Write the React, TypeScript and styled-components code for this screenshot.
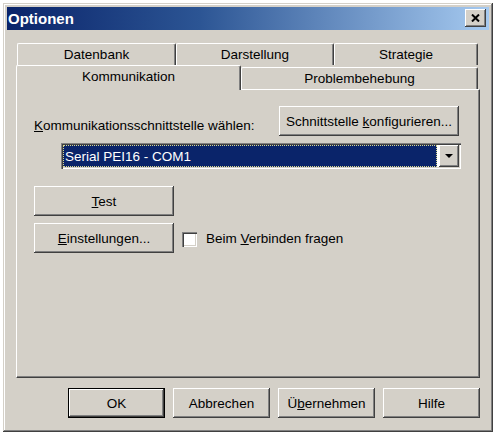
import styled, { createGlobalStyle } from "styled-components";

const GlobalStyle = createGlobalStyle`
  body {
    margin: 0;
    background: #ffffff;
    font-family: "Liberation Sans", Arial, sans-serif;
  }
`

const Window = styled.div`
  box-sizing: border-box;
  width: 490px;
  height: 429px;
  margin: 3px;
  padding: 4px;
  display: flex;
  flex-direction: column;
  background: #d4d0c8;
  box-shadow: inset -1px -1px #404040, inset 1px 1px #d4d0c8,
    inset -2px -2px #808080, inset 2px 2px #ffffff;
`

const TitleBar = styled.div`
  height: 23px;
  display: flex;
  align-items: center;
  justify-content: space-between;
  padding: 0 3px 0 1px;
  background: linear-gradient(to right, #0a246a 0%, #2c5594 40%, #a6caf0 100%);
`

const Title = styled.span`
  color: #ffffff;
  font-weight: bold;
  font-size: 15px;
`

const CloseButton = styled.div`
  box-sizing: border-box;
  width: 21px;
  height: 18px;
  margin-top: -2px;
  display: flex;
  align-items: center;
  justify-content: center;
  background: #d4d0c8;
  box-shadow: inset -1px -1px #404040, inset 1px 1px #ffffff,
    inset -2px -2px #808080;
`

const Body = styled.div`
  flex: 1;
  display: flex;
  flex-direction: column;
  padding: 13px 9px 0 9px;
`

const TabRow = styled.div<{ $height: number; $indent: number }>`
  display: flex;
  align-items: flex-end;
  height: ${p => p.$height}px;
  padding-left: ${p => p.$indent}px;
`

const Tab = styled.div<{ $width: number; $selected?: boolean }>`
  box-sizing: border-box;
  width: ${p => p.$width}px;
  height: ${p => (p.$selected ? 25 : 22)}px;
  margin-bottom: ${p => (p.$selected ? -1 : 0)}px;
  position: relative;
  z-index: ${p => (p.$selected ? 2 : 0)};
  display: flex;
  align-items: center;
  justify-content: center;
  padding-bottom: ${p => (p.$selected ? 3 : 0)}px;
  font-size: 13.5px;
  color: #000000;
  background: #d4d0c8;
  border-top: 1px solid #ffffff;
  border-left: 1px solid #ffffff;
  border-right: 1px solid #404040;
  border-radius: 2px 2px 0 0;
  box-shadow: inset -1px 0 #808080;
`

const Panel = styled.div`
  box-sizing: border-box;
  height: 289px;
  position: relative;
  z-index: 1;
  padding: 16px 20px 0 17px;
  display: flex;
  flex-direction: column;
  border-top: 1px solid #ffffff;
  border-left: 1px solid #ffffff;
  border-right: 1px solid #404040;
  border-bottom: 1px solid #404040;
  box-shadow: inset -1px -1px #808080;
`

const TopLine = styled.div`
  display: flex;
  justify-content: space-between;
  align-items: flex-end;
`

const Label = styled.span`
  font-size: 13.5px;
  color: #000000;
  padding-bottom: 3px;
`

const Button = styled.div<{ $width: number; $default?: boolean }>`
  box-sizing: border-box;
  width: ${p => p.$width}px;
  height: 30px;
  display: flex;
  align-items: center;
  justify-content: center;
  font-size: 13.5px;
  color: #000000;
  background: #d4d0c8;
  border: ${p => (p.$default ? "1px solid #000000" : "none")};
  box-shadow: inset -1px -1px #404040, inset 1px 1px #ffffff,
    inset -2px -2px #808080;
`

const Combo = styled.div`
  box-sizing: border-box;
  width: 400px;
  height: 26px;
  margin: 7px 0 0 27px;
  padding: 2px;
  display: flex;
  background: #ffffff;
  box-shadow: inset 1px 1px #808080, inset 2px 2px #404040,
    inset -1px -1px #ffffff, inset -2px -2px #d4d0c8;
`

const Selection = styled.div`
  flex: 1;
  display: flex;
  align-items: center;
  margin-right: 2px;
  padding-left: 2px;
  background: #0a246a;
  color: #ffffff;
  font-size: 13.5px;
  outline: 1px dotted #d8d890;
  outline-offset: -1px;
`

const DropButton = styled.div`
  box-sizing: border-box;
  width: 20px;
  display: flex;
  align-items: center;
  justify-content: center;
  background: #d4d0c8;
  box-shadow: inset -1px -1px #404040, inset 1px 1px #ffffff,
    inset -2px -2px #808080;
`

const Arrow = styled.div`
  width: 0;
  height: 0;
  border-left: 4px solid transparent;
  border-right: 4px solid transparent;
  border-top: 4px solid #000000;
`

const ButtonRow = styled.div<{ $top: number }>`
  display: flex;
  align-items: center;
  margin-top: ${p => p.$top}px;
`

const CheckBox = styled.div`
  box-sizing: border-box;
  width: 15px;
  height: 15px;
  margin-left: 8px;
  margin-top: 2px;
  background: #ffffff;
  box-shadow: inset 1px 1px #808080, inset 2px 2px #404040,
    inset -1px -1px #ffffff, inset -2px -2px #d4d0c8;
`

const CheckLabel = styled.span`
  margin-left: 9px;
  font-size: 13.5px;
  color: #000000;
`

const Footer = styled.div`
  display: flex;
  justify-content: flex-end;
  gap: 8px;
  margin-top: 10px;
`

const App = () => {
    return (
        <>
            <GlobalStyle/>
            <Window>
                <TitleBar>
                    <Title>Optionen</Title>
                    <CloseButton>
                        <svg width="9" height="8" viewBox="0 0 9 8">
                            <path d="M1 0.5 L8 7.5 M8 0.5 L1 7.5" stroke="#000" strokeWidth="2"/>
                        </svg>
                    </CloseButton>
                </TitleBar>
                <Body>
                    <TabRow $height={22} $indent={1}>
                        <Tab $width={159}>Datenbank</Tab>
                        <Tab $width={158}>Darstellung</Tab>
                        <Tab $width={144}>Strategie</Tab>
                    </TabRow>
                    <TabRow $height={24} $indent={0}>
                        <Tab $width={225} $selected>Kommunikation</Tab>
                        <Tab $width={237}>Problembehebung</Tab>
                    </TabRow>
                    <Panel>
                        <TopLine>
                            <Label><u>K</u>ommunikationsschnittstelle wählen:</Label>
                            <Button $width={180}><span>Schnittstelle <u>k</u>onfigurieren...</span></Button>
                        </TopLine>
                        <Combo>
                            <Selection>Serial PEI16 - COM1</Selection>
                            <DropButton><Arrow/></DropButton>
                        </Combo>
                        <ButtonRow $top={17}>
                            <Button $width={140}><span><u>T</u>est</span></Button>
                        </ButtonRow>
                        <ButtonRow $top={7}>
                            <Button $width={140}><span><u>E</u>instellungen...</span></Button>
                            <CheckBox/>
                            <CheckLabel>Beim <u>V</u>erbinden fragen</CheckLabel>
                        </ButtonRow>
                    </Panel>
                    <Footer>
                        <Button $width={97} $default>OK</Button>
                        <Button $width={97}>Abbrechen</Button>
                        <Button $width={97}><span>Ü<u>b</u>ernehmen</span></Button>
                        <Button $width={97}>Hilfe</Button>
                    </Footer>
                </Body>
            </Window>
        </>
    )
}

export default App;
